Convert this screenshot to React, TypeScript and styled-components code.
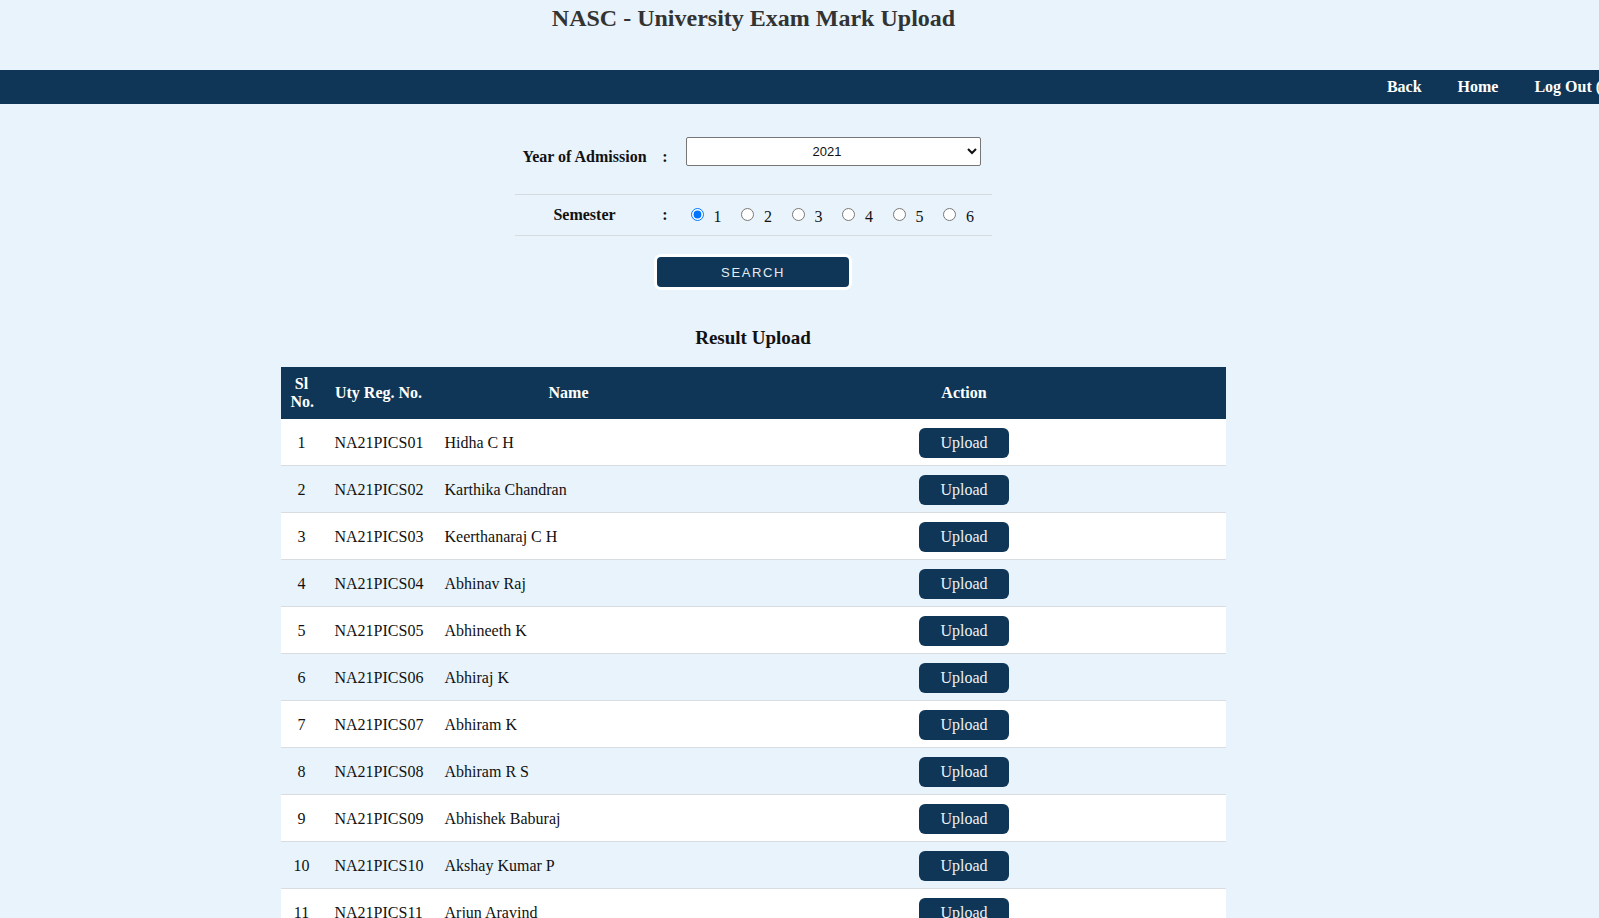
import React from "react";
import styled, { createGlobalStyle } from "styled-components";

const NAVY = "#0f3656";
const BG = "#e8f3fc";

const GlobalStyle = createGlobalStyle`
  html, body {
    margin: 0;
    padding: 0;
    background: ${BG};
    font-family: "Liberation Serif", "Times New Roman", serif;
    color: #111;
  }
  #root { width: 100%; }
`;

const Page = styled.div`
  width: 100%;
  overflow: hidden;
`;

const Header = styled.header`
  width: 1507px;
  height: 70px;
  display: flex;
  justify-content: center;
  align-items: flex-start;
`;

const Title = styled.h1`
  margin: 0;
  padding-top: 5px;
  font-size: 24px;
  line-height: 27px;
  font-weight: 700;
  color: #333;
`;

const NavBar = styled.nav`
  width: 100%;
  height: 34px;
  background: ${NAVY};
  display: flex;
  justify-content: flex-end;
  align-items: center;
  overflow: hidden;
`;

const NavList = styled.ul`
  list-style: none;
  margin: 0 -69px 0 0;
  padding: 0;
  display: flex;
  flex-shrink: 0;
`;

const NavLink = styled.li`
  padding: 0 18px;
  color: #fff;
  font-weight: 700;
  font-size: 16px;
  white-space: nowrap;
  cursor: pointer;
`;

const Main = styled.main`
  width: 1506px;
  display: flex;
  flex-direction: column;
  align-items: center;
`;

const Form = styled.form`
  width: 477px;
  margin-top: 16px;
  display: flex;
  flex-direction: column;
  align-items: center;
`;

const FormRow = styled.div<{ $h: number }>`
  width: 100%;
  height: ${(p) => p.$h}px;
  display: grid;
  grid-template-columns: 140px 21px 1fr;
  align-items: center;
  border-bottom: 1px solid #d6dbe0;
`;

const FieldLabel = styled.label`
  text-align: center;
  font-weight: 700;
  font-size: 16px;
`;

const Colon = styled.span`
  text-align: center;
  font-weight: 700;
  font-size: 16px;
`;

const Field = styled.div`
  padding-left: 10px;
  display: flex;
  align-items: center;
`;

const Select = styled.select`
  width: 295px;
  height: 29px;
  margin-bottom: 11px;
  font-family: "Liberation Sans", Arial, sans-serif;
  font-size: 13px;
  text-align: center;
  text-align-last: center;
  background: #fff;
  border: 1px solid #767676;
  border-radius: 2px;
  color: #111;
`;

const RadioGroup = styled.div`
  display: flex;
  gap: 14.5px;
`;

const RadioOption = styled.label`
  display: flex;
  align-items: center;
  font-size: 16px;
  cursor: pointer;

  input {
    margin: 0 3px 1px 5px;
    width: 13px;
    height: 13px;
  }
  span {
    margin-left: 7px;
    margin-top: 3px;
  }
`;

const SearchButton = styled.button`
  margin-top: 18px;
  width: 198px;
  height: 36px;
  background: ${NAVY};
  color: #e4ecf3;
  border: 3px solid #fff;
  border-radius: 7px;
  font-family: "Liberation Sans", Arial, sans-serif;
  font-size: 13px;
  letter-spacing: 1.6px;
  cursor: pointer;
`;

const SectionTitle = styled.h3`
  margin: 37px 0 18px;
  font-size: 19px;
  line-height: 22px;
  font-weight: 700;
  color: #111;
`;

const Table = styled.table`
  width: 945px;
  table-layout: fixed;
  border-collapse: collapse;
  font-size: 16px;
`;

const HeadRow = styled.tr`
  background: ${NAVY};
`;

const Th = styled.th<{ $w: number }>`
  box-sizing: border-box;
  width: ${(p) => p.$w}px;
  padding: 8px 10px;
  line-height: 18px;
  color: #fff;
  font-weight: 700;
  text-align: center;
`;

const Tr = styled.tr<{ $alt: boolean }>`
  background: ${(p) => (p.$alt ? BG : "#fff")};
  border-bottom: 1px solid #d9dde1;
`;

const Td = styled.td<{ $align?: string; $pl?: number }>`
  padding: 9px 10px 7px ${(p) => p.$pl ?? 10}px;
  line-height: 18px;
  text-align: ${(p) => p.$align || "left"};
  vertical-align: middle;
  color: #111;
  white-space: nowrap;
`;

const UploadButton = styled.button`
  width: 90px;
  height: 30px;
  background: ${NAVY};
  color: #eef2f6;
  border: none;
  border-radius: 6px;
  font-family: "Liberation Serif", "Times New Roman", serif;
  font-size: 16px;
  cursor: pointer;
  vertical-align: middle;
`;

const students = [
  "Hidha C H",
  "Karthika Chandran",
  "Keerthanaraj C H",
  "Abhinav Raj",
  "Abhineeth K",
  "Abhiraj K",
  "Abhiram K",
  "Abhiram R S",
  "Abhishek Baburaj",
  "Akshay Kumar P",
  "Arjun Aravind",
  "Arjun K",
  "Aswin Das",
];

export default function App() {
  const [sem, setSem] = React.useState("1");
  return (
    <Page>
      <GlobalStyle />
      <Header>
        <Title>NASC - University Exam Mark Upload</Title>
      </Header>
      <NavBar>
        <NavList>
          <NavLink>Back</NavLink>
          <NavLink>Home</NavLink>
          <NavLink>Log Out (admin)</NavLink>
        </NavList>
      </NavBar>
      <Main>
        <Form onSubmit={(e) => e.preventDefault()}>
          <FormRow $h={74}>
            <FieldLabel>Year of Admission</FieldLabel>
            <Colon>:</Colon>
            <Field>
              <Select defaultValue="2021">
                <option>2019</option>
                <option>2020</option>
                <option>2021</option>
                <option>2022</option>
              </Select>
            </Field>
          </FormRow>
          <FormRow $h={40}>
            <FieldLabel>Semester</FieldLabel>
            <Colon>:</Colon>
            <Field>
              <RadioGroup>
                {["1", "2", "3", "4", "5", "6"].map((s) => (
                  <RadioOption key={s}>
                    <input
                      type="radio"
                      name="sem"
                      checked={sem === s}
                      onChange={() => setSem(s)}
                    />
                    <span>{s}</span>
                  </RadioOption>
                ))}
              </RadioGroup>
            </Field>
          </FormRow>
          <SearchButton type="submit">SEARCH</SearchButton>
        </Form>
        <SectionTitle>Result Upload</SectionTitle>
        <Table>
          <thead>
            <HeadRow>
              <Th $w={42}>Sl No.</Th>
              <Th $w={112}>Uty Reg. No.</Th>
              <Th $w={268}>Name</Th>
              <Th $w={523}>Action</Th>
            </HeadRow>
          </thead>
          <tbody>
            {students.map((name, i) => {
              const n = i + 1;
              return (
                <Tr key={n} $alt={i % 2 === 1}>
                  <Td $align="center">{n}</Td>
                  <Td $pl={12}>NA21PICS{String(n).padStart(2, "0")}</Td>
                  <Td>{name}</Td>
                  <Td $align="center">
                    <UploadButton>Upload</UploadButton>
                  </Td>
                </Tr>
              );
            })}
          </tbody>
        </Table>
      </Main>
    </Page>
  );
}
